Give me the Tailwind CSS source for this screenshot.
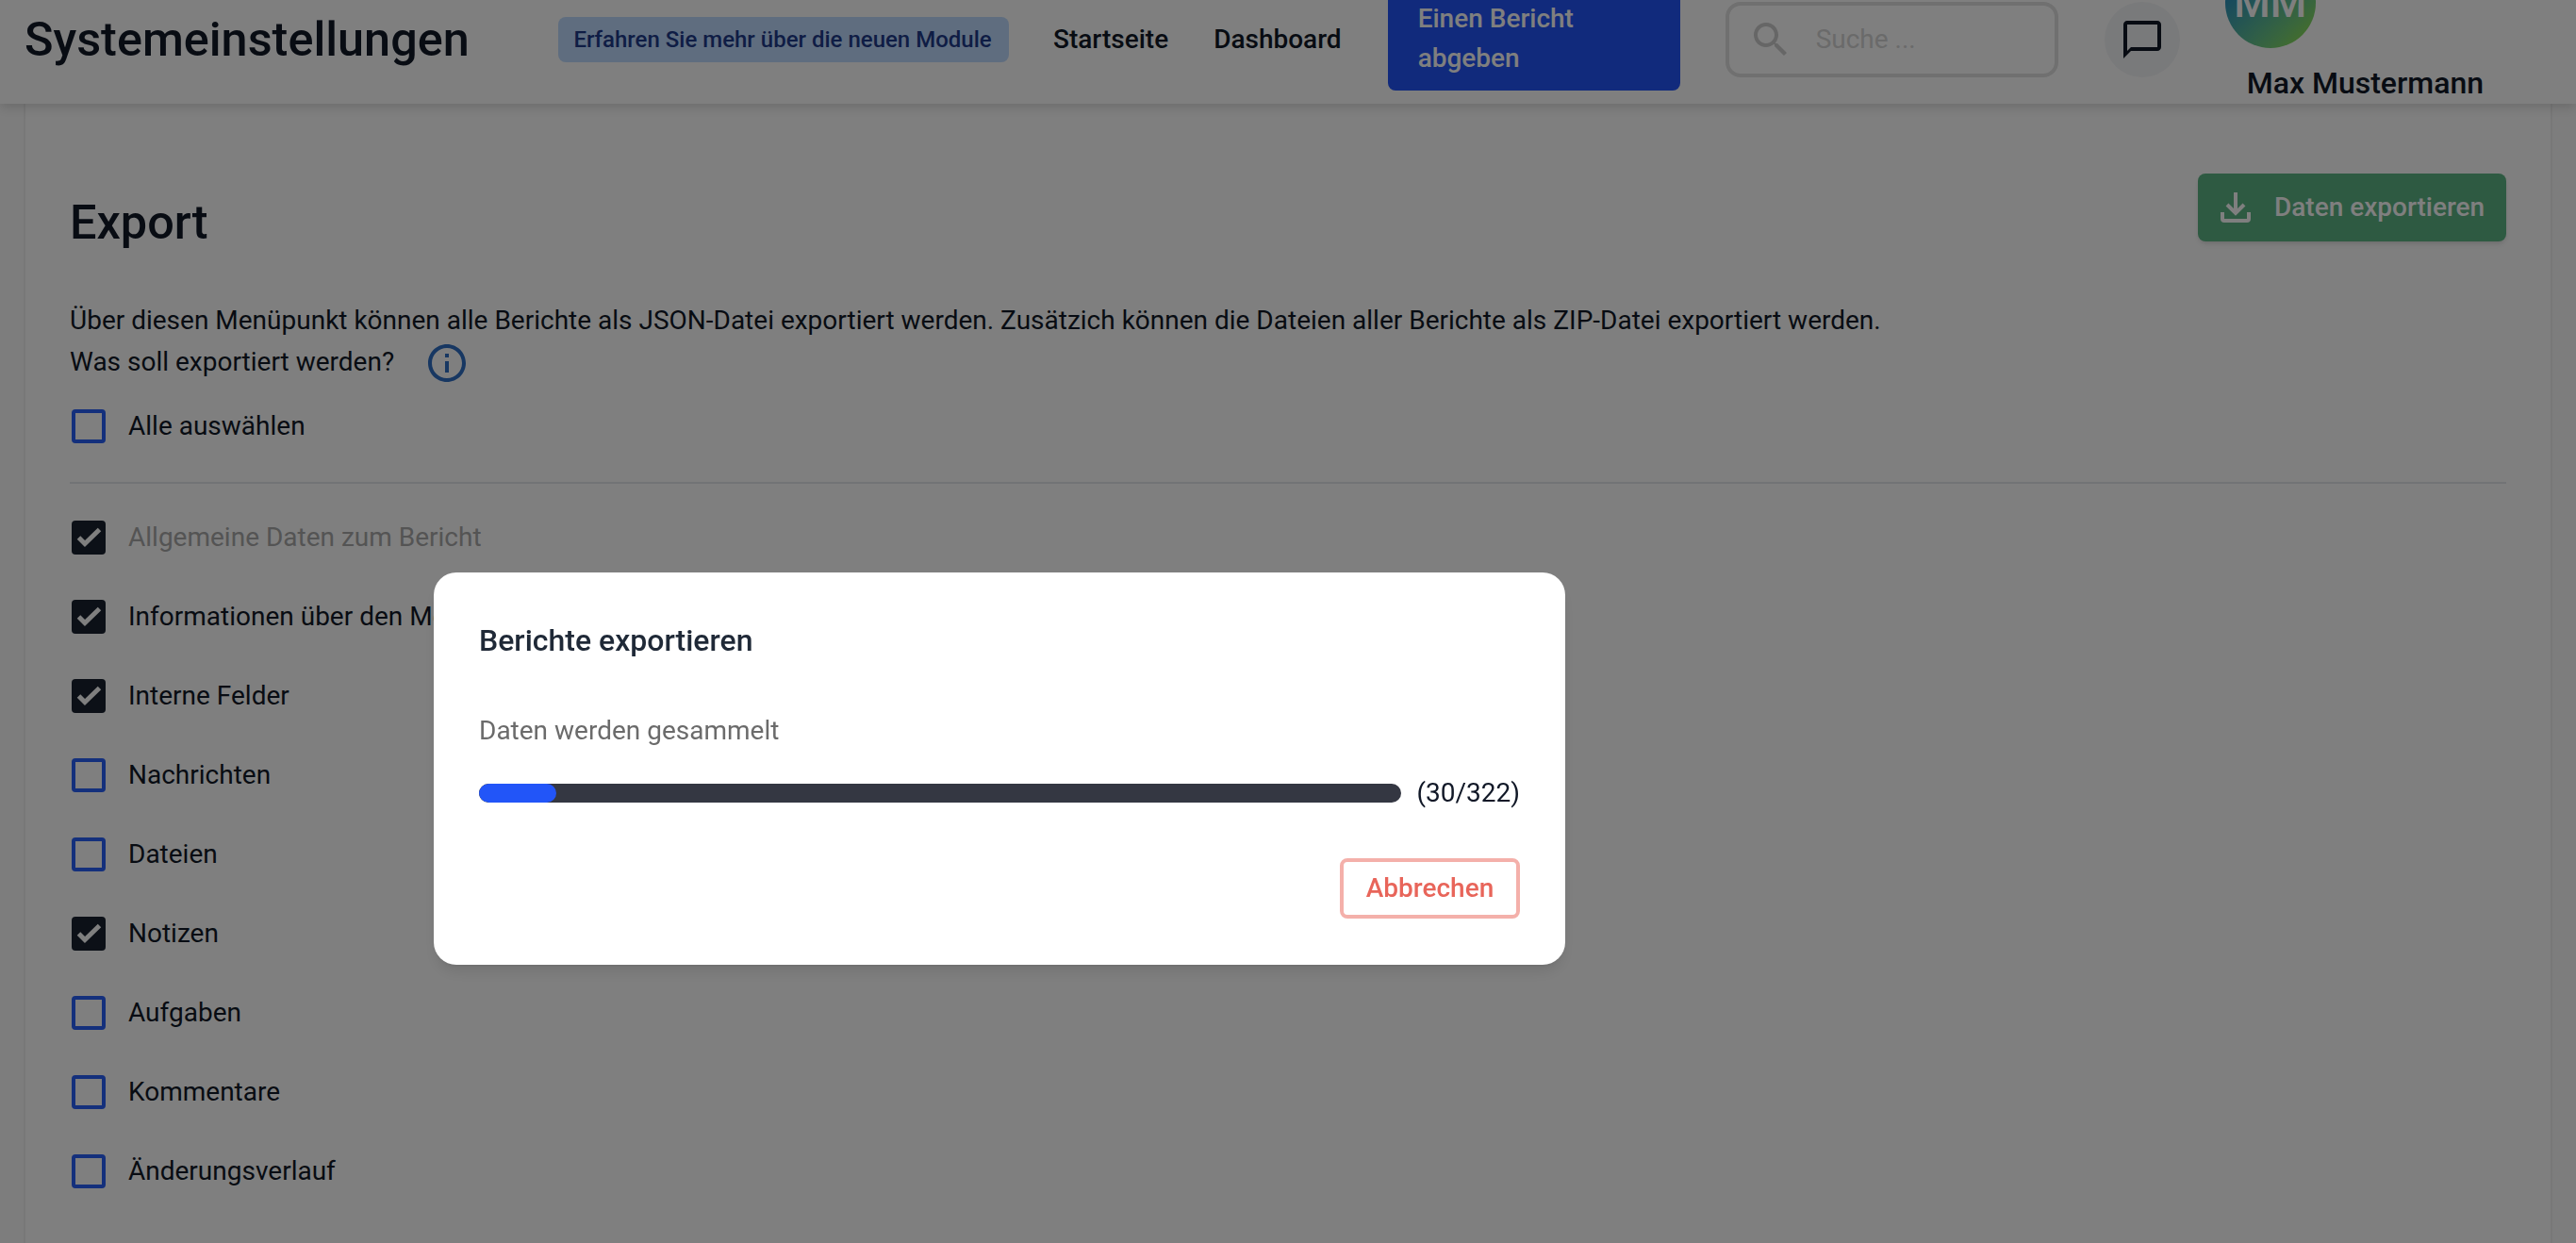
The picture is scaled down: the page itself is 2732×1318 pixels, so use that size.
<!DOCTYPE html>
<html lang="de">

<head>
    <meta charset="UTF-8">
    <meta name="viewport" content="width=device-width, initial-scale=1.0">
    <title>Systemeinstellungen</title>
    <script src="https://cdn.jsdelivr.net/npm/@tailwindcss/browser@4"></script>
</head>

<body class="h-[1318px] overflow-hidden bg-[#fbfbfb] font-['Roboto',sans-serif] text-[#111827]">
    <!-- header -->
    <header class="relative z-10 h-[110px] bg-white shadow-[0_4px_12px_rgba(0,0,0,0.15)]">
        <div class="flex h-[84px] items-center pl-[26px]">
            <h1 class="w-[566px] text-[50.4px] font-medium leading-[60px]">Systemeinstellungen</h1>
            <a class="flex h-[48px] w-[478px] items-center justify-center rounded-lg bg-[#bfdbfe] pr-[2px] text-[24px] font-medium text-[#1e3a8a]">Erfahren Sie mehr über die neuen Module</a>
            <a class="ml-[47px] text-[28px] font-medium">Startseite</a>
            <a class="ml-[48px] text-[28px] font-medium">Dashboard</a>
            <button class="-mt-[14px] ml-[49px] h-[110px] w-[310px] self-start rounded-lg bg-[#2255f8] px-8 py-[13px] text-left text-[28px] font-medium leading-[42px] text-white">Einen Bericht abgeben</button>
            <div class="ml-[48px] flex h-[80px] w-[353px] items-center rounded-2xl border-4 border-[#e0e0e0] pl-6">
                <svg class="-ml-[4px] h-[48px] w-[48px] text-[#cccccc]" viewBox="0 0 24 24" fill="currentColor"><path d="M15.5 14h-.79l-.28-.27C15.41 12.59 16 11.11 16 9.5 16 5.91 13.09 3 9.5 3S3 5.91 3 9.5 5.91 16 9.5 16c1.61 0 3.09-.59 4.23-1.57l.27.28v.79l5 4.99L20.49 19l-4.99-5zm-6 0C7.01 14 5 11.99 5 9.5S7.01 5 9.5 5 14 7.01 14 9.5 11.99 14 9.5 14z"/></svg>
                <span class="ml-[24px] text-[28px] text-[#d4d4d4]">Suche ...</span>
            </div>
            <div class="ml-[49px] flex h-[80px] w-[80px] items-center justify-center rounded-full bg-[#f3f4f6]">
                <svg class="h-[48px] w-[48px]" viewBox="0 0 24 24" fill="currentColor"><path d="M20 2H4c-1.1 0-2 .9-2 2v18l4-4h14c1.1 0 2-.9 2-2V4c0-1.1-.9-2-2-2zm0 14H6l-2 2V4h16v12z"/></svg>
            </div>
            <div class="ml-[48px] flex flex-col self-start">
                <div class="-mt-[45px] flex h-[96px] w-[96px] items-center justify-center rounded-full bg-gradient-to-br from-[#1070d0] to-[#98e820] text-[44px] font-medium text-white">MM</div>
                <span class="ml-[23px] mt-[19px] whitespace-nowrap text-[32px] font-medium leading-[36px]">Max Mustermann</span>
            </div>
        </div>
    </header>

    <!-- content -->
    <main class="mx-[25px] h-[1208px] border-x-2 border-[#f0f0f0] bg-white px-[47px] pt-[74px]">
        <div class="flex items-start justify-between">
            <h2 class="mt-[22px] text-[50.4px] font-medium leading-[60px]">Export</h2>
            <button class="flex h-[72px] w-[327px] items-center rounded-lg bg-[#5cb484] pl-[24px] text-[28px] font-medium text-white shadow-md">
                <svg class="h-[32px] w-[32px]" viewBox="0 0 32 32" fill="none" stroke="currentColor" stroke-width="4"><path d="M16 0v22M7 13l9 9 9-9M2 21v7a2 2 0 0 0 2 2h24a2 2 0 0 0 2-2v-7"/></svg>
                <span class="ml-[25px]">Daten exportieren</span>
            </button>
        </div>
        <p class="mt-[52px] text-[28px] leading-[44px]">Über diesen Menüpunkt können alle Berichte als JSON-Datei exportiert werden. Zusätzich können die Dateien aller Berichte als ZIP-Datei exportiert werden.</p>
        <div class="flex h-[44px] items-center text-[28px] leading-[44px]">
            <span>Was soll exportiert werden?</span>
            <svg class="ml-[32px] mt-[2px] h-[48px] w-[48px] text-[#2f6fc4]" viewBox="0 0 24 24" fill="currentColor"><path d="M11 7h2v2h-2zm0 4h2v6h-2zm1-9C6.48 2 2 6.48 2 12s4.48 10 10 10 10-4.48 10-10S17.52 2 12 2zm0 18c-4.41 0-8-3.59-8-8s3.59-8 8-8 8 3.59 8 8-3.59 8-8 8z"/></svg>
        </div>

        <label class="mt-[28px] flex h-[36px] items-center gap-[24px] pl-[2px] text-[28px]"><span class="h-[36px] w-[36px] rounded border-4 border-[#2860f8]"></span>Alle auswählen</label>
        <hr class="mb-[39px] mt-[41px] border-t-2 border-[#e5e7eb]">

        <div class="flex flex-col gap-[48px] text-[28px]">
            <label class="flex h-[36px] items-center gap-[24px] pl-[2px] text-[#a8a8a8]">
                <span class="h-[36px] w-[36px] rounded bg-[#18212f] text-white"><svg class="h-[36px] w-[36px]" viewBox="0 0 36 36" fill="none" stroke="currentColor" stroke-width="5"><path d="M7.500 18l6.500 6.500 15.500-15"/></svg></span>Allgemeine Daten zum Bericht</label>
            <label class="flex h-[36px] items-center gap-[24px] pl-[2px]">
                <span class="h-[36px] w-[36px] rounded bg-[#18212f] text-white"><svg class="h-[36px] w-[36px]" viewBox="0 0 36 36" fill="none" stroke="currentColor" stroke-width="5"><path d="M7.500 18l6.500 6.500 15.500-15"/></svg></span>Informationen über den Meldenden</label>
            <label class="flex h-[36px] items-center gap-[24px] pl-[2px]">
                <span class="h-[36px] w-[36px] rounded bg-[#18212f] text-white"><svg class="h-[36px] w-[36px]" viewBox="0 0 36 36" fill="none" stroke="currentColor" stroke-width="5"><path d="M7.500 18l6.500 6.500 15.500-15"/></svg></span>Interne Felder</label>
            <label class="flex h-[36px] items-center gap-[24px] pl-[2px]"><span class="h-[36px] w-[36px] rounded border-4 border-[#2860f8]"></span>Nachrichten</label>
            <label class="flex h-[36px] items-center gap-[24px] pl-[2px]"><span class="h-[36px] w-[36px] rounded border-4 border-[#2860f8]"></span>Dateien</label>
            <label class="flex h-[36px] items-center gap-[24px] pl-[2px]">
                <span class="h-[36px] w-[36px] rounded bg-[#18212f] text-white"><svg class="h-[36px] w-[36px]" viewBox="0 0 36 36" fill="none" stroke="currentColor" stroke-width="5"><path d="M7.500 18l6.500 6.500 15.500-15"/></svg></span>Notizen</label>
            <label class="flex h-[36px] items-center gap-[24px] pl-[2px]"><span class="h-[36px] w-[36px] rounded border-4 border-[#2860f8]"></span>Aufgaben</label>
            <label class="flex h-[36px] items-center gap-[24px] pl-[2px]"><span class="h-[36px] w-[36px] rounded border-4 border-[#2860f8]"></span>Kommentare</label>
            <label class="flex h-[36px] items-center gap-[24px] pl-[2px]"><span class="h-[36px] w-[36px] rounded border-4 border-[#2860f8]"></span>Änderungsverlauf</label>
        </div>
    </main>

    <!-- modal -->
    <div class="fixed inset-0 z-20 bg-black/50">
        <div class="absolute left-[460px] top-[607px] h-[416px] w-[1200px] rounded-3xl bg-white p-12 shadow-lg">
            <h3 class="text-[32px] font-medium leading-[48px] text-[#1f2937]">Berichte exportieren</h3>
            <p class="mt-[50px] text-[28px] leading-[44px] text-[#6b6b6b]">Daten werden gesammelt</p>
            <div class="mt-[22px] flex h-[44px] items-center gap-[16px]">
                <div class="h-[20px] w-[979px] overflow-hidden rounded-full bg-[#343742]">
                    <div class="h-full w-[82px] rounded-full bg-[#2255f8]"></div>
                </div>
                <span class="text-[28px]">(30/322)</span>
            </div>
            <div class="mt-[47px] flex justify-end">
                <button class="h-[64px] w-[191px] rounded-lg border-4 border-[#f4b0aa] text-[28px] font-medium text-[#e8655a]">Abbrechen</button>
            </div>
        </div>
    </div>
</body>

</html>
